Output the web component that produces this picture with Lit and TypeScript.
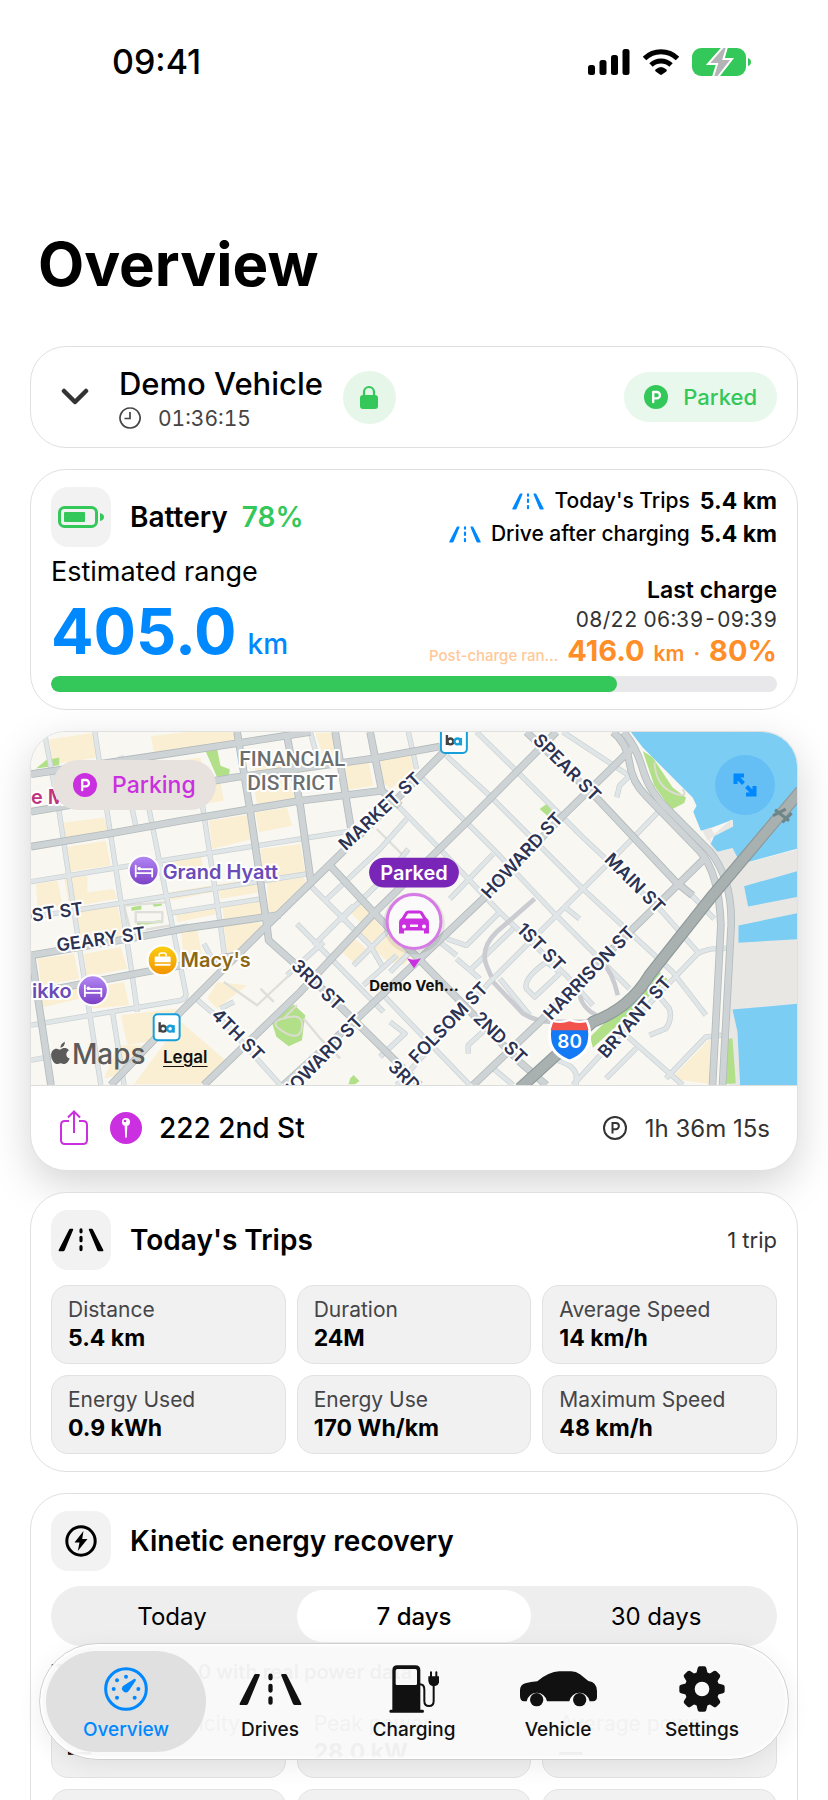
import { css, html, LitElement, svg } from 'lit';
import { customElement, property, state } from 'lit/decorators.js';
import { classMap } from 'lit/directives/class-map.js';

const roadIcon = html`
  <svg class="road" viewBox="0 0 190 100" aria-hidden="true">
    <path d="M50 3h10q4 0 2 5L27 93q-2 4-6 4H5q-5 0-3-5L45 7q2-4 5-4zM140 3h-10q-4 0-2 5l35 85q2 4 6 4h16q5 0 3-5L145 7q-2-4-5-4z"/>
    <path d="M95 8v8M95 39v14M95 77v13" fill="none" stroke="currentColor" stroke-width="13" stroke-linecap="round"/>
  </svg>`;

const parkIcon = html`
  <svg class="park" viewBox="0 0 24 24" aria-hidden="true">
    <circle cx="12" cy="12" r="12"/>
    <path d="M9.2 17.2V7h3.600a3.100 3.100 0 0 1 0 6.300H9.2" fill="none" stroke="#fff" stroke-width="2.300" stroke-linecap="round" stroke-linejoin="round"/>
  </svg>`;

const tabs = [
  {
    id: 'overview',
    label: 'Overview',
    icon: html`
      <svg width="44" height="44" viewBox="0 0 132 132" aria-hidden="true">
        <circle cx="66" cy="66" r="61" fill="none" stroke="currentColor" stroke-width="9"/>
        <circle cx="66" cy="29" r="6"/><circle cx="39" cy="40" r="6"/><circle cx="29" cy="66" r="6"/>
        <circle cx="39" cy="92" r="6"/><circle cx="92" cy="92" r="6"/><circle cx="103" cy="66" r="6"/>
        <path d="M94 36q3 2 1 5L74 72a11 11 0 1 1-17-15L90 36q2-1 4 0z"/>
      </svg>`,
  },
  { id: 'drives', label: 'Drives', icon: roadIcon },
  {
    id: 'charging',
    label: 'Charging',
    icon: html`
      <svg width="50" height="48" viewBox="0 0 150 144" aria-hidden="true">
        <path fill-rule="evenodd" d="M10 16Q10 1 25 1h54q15 0 15 15v118h7q4 0 4 4.500t-4 4.500H5q-4 0-4-4.500t4-4.500h5zM20 17v39q0 4 4 4h56q4 0 4-4V17q0-5-5-5H25q-5 0-5 5z"/>
        <path d="M92 58q14 0 14 16v34q0 15 14 15t14-15V58" fill="none" stroke="currentColor" stroke-width="6"/>
        <path d="M118 34h33v12q0 14-12 17h-9q-12-3-12-17z"/>
        <path d="M126 22v14M142 22v14" stroke="currentColor" stroke-width="6" stroke-linecap="round"/>
      </svg>`,
  },
  {
    id: 'vehicle',
    label: 'Vehicle',
    icon: html`
      <svg width="77" height="36" viewBox="0 0 231 108" aria-hidden="true">
        <path d="M12 91Q0 90 0 74V58q0-16 16-21 16-4 36-6Q86 2 118 1h36q14 0 26 9l25 20q26 4 26 30v18q0 12-12 13h-10a31 31 0 0 0-61 0H81a31 31 0 0 0-61 0z"/>
        <circle cx="50" cy="86" r="20"/><circle cx="179" cy="86" r="20"/>
      </svg>`,
  },
  {
    id: 'settings',
    label: 'Settings',
    icon: html`
      <svg width="46" height="46" viewBox="-69 -69 138 138" aria-hidden="true">
        <circle r="37" fill="none" stroke="currentColor" stroke-width="30"/>
        ${[0, 45, 90, 135, 180, 225, 270, 315].map(
          (a) => svg`<path transform="rotate(${a})" d="M-17-46l4-17q1-5 6-5H7q5 0 6 5l4 17z"/>`
        )}
      </svg>`,
  },
];

const periods = ['Today', '7 days', '30 days'];

const tripStats = [
  ['Distance', '5.4 km'],
  ['Duration', '24M'],
  ['Average Speed', '14 km/h'],
  ['Energy Used', '0.9 kWh'],
  ['Energy Use', '170 Wh/km'],
  ['Maximum Speed', '48 km/h'],
];

const kineticStats = [
  ['Kinetic electricity', '—'],
  ['Peak power', '28.0 kW'],
  ['Average power', '—'],
  ['Recovered', '0.6 kWh'],
  ['Share', '12%'],
  ['Events', '31'],
];

// Map geometry, in thirds of a pixel.
const blocks = [
  '85,40 220,20 232,95 95,115', '390,30 500,18 640,18 645,45 400,80', '135,150 220,135 240,225 160,240',
  '440,110 540,95 550,170 600,170 610,225 450,250', '700,110 790,95 800,150 710,165', '700,170 800,155 825,220 710,240',
  '885,20 940,20 960,90 910,95', '975,115 1045,105 1060,180 985,192', '1080,100 1170,85 1180,130 1110,190 1090,170',
  '130,290 250,275 262,320 130,345', '130,365 255,345 270,420 140,440', '565,285 680,268 695,340 575,370',
  '705,260 800,245 815,300 790,305 715,320', '45,475 110,465 125,540 50,550', '130,460 200,450 200,500 280,490 290,520 145,545',
  '430,400 540,380 550,440 440,455', '720,370 840,355 855,440 730,460', '450,500 570,480 575,500 450,525',
  '590,475 715,460 720,500 600,520', '740,470 850,455 860,475 780,560 745,560', '465,560 590,540 595,565 470,590',
  '605,540 720,525 725,565 610,585', '160,560 290,540 310,630 180,660', '50,700 160,685 175,760 60,780',
  '190,685 300,665 320,730 195,755', '480,615 530,610 545,690 490,700', '610,600 720,590 725,610 640,690 620,690',
  '200,790 310,770 325,840 215,850', '40,790 170,790 180,820 50,850', '300,870 470,850 380,950 320,960',
  '290,960 370,960 290,1050 250,1060', '480,890 620,1010 550,1078 340,1078', '590,770 680,780 590,850 560,820',
  '990,560 1020,530 1055,560 1025,595', '1015,620 1060,575 1110,640 1050,650', '965,680 1005,640 1045,675 1005,715',
  '1060,670 1110,630 1180,690 1150,720 1105,710', '2073,940 2073,1078 1955,1060',
];

const parks = [
  '555,75 590,70 600,120 628,130 625,152 590,155', '45,128 75,103 115,95 115,118 90,122', '332,545 362,540 362,552 332,556',
  '395,535 420,528 425,540 400,544', '348,592 420,584 420,592 350,600',
  '820,838 855,870 850,905 845,945 805,963 768,935 755,893 790,860', '990,1060 1000,1050 1018,1068 1005,1078 985,1078',
  '1870,75 1900,95 1960,185 2000,215 1995,232 1955,252 1905,180', '1915,735 1945,762 1720,968 1712,935',
  '2120,940 2140,940 2150,1075 2115,1078', '1560,250 1580,235 1602,260 1590,277',
];

const minorRoads = [
  'M30 468L480 396 870 335 990 316', 'M30 575L480 505 860 445', 'M455 562L722 520', 'M455 610L500 602', 'M30 900L270 860 480 825Q500 820 495 800L385 250',
  'M30 1005L130 988', 'M70 18L115 260 190 760 240 1080', 'M222 18L270 330 330 720 350 860', 'M300 90L345 300', 'M375 90L400 250',
  'M540 200L600 600 612 690', 'M275 860L310 1080', 'M550 655L575 700', 'M870 18L890 90', 'M1165 18L1190 130',
  'M870 480L1050 660 1085 720', 'M910 530L1080 370 1160 280', 'M960 585L1110 440 1165 370', 'M830 595L1090 860', 'M880 660L1000 540', 'M800 750L910 650',
  'M1000 720L1130 590', 'M1030 780L1130 690', 'M1190 620L1250 560M1110 740L1190 660', 'M1090 195L1260 370 1440 560 1640 750 1720 840',
  'M1200 150L1340 290 1430 380 1610 570 1830 790', 'M1280 90L1410 210 1620 420 1690 490 1960 740 2060 870', 'M1370 18L1490 135 1690 335 1930 560 2035 680',
  'M1630 18L1830 150 1800 180 1792 215', 'M1130 1080L1410 770 1610 570 1760 420 1930 245', 'M1660 1080L1770 960 2035 685Q2060 668 2120 668',
  'M1760 1060L1850 970', 'M1820 930L1990 1080', 'M1940 1060L2060 935 2110 930', 'M1110 890L1155 925 1080 995',
  'M1290 520L1420 385M1440 560L1340 660 1280 640', 'M1440 760L1530 870M1620 740L1580 710Q1510 760 1520 790L1545 815 1620 745',
  'M1345 985V960L1400 910M1420 1030L1480 1080', 'M520 815L620 900 780 1080', 'M1090 810L1350 1080', 'M600 850L640 830',
  'M1310 700L1380 760M1345 740L1480 610', 'M1260 650L1310 690', 'M1580 1000Q1660 1010 1670 1050V1080', 'M1630 540L1680 580',
  'M1990 480L2085 580', 'M1900 790L1950 850Q1960 880 1940 910L1890 930',
];

const majorRoads = [
  'M30 145L400 90 650 52 870 18', 'M30 258L640 155 1060 98 1260 62', 'M30 363L260 325 480 285 840 225 1085 195 1140 240',
  'M30 690L370 632 500 608 780 568', 'M30 805L400 735 650 690', 'M650 18L690 260 738 590 745 645 880 765 1200 1080',
  'M800 30L840 240 872 470', 'M945 18L992 305', 'M1050 18L1085 195', 'M30 680L90 1080', 'M270 1080L480 860 740 600 930 415 1130 220 1280 70',
  'M550 1080L840 800 1060 565 1340 290 1610 18', 'M790 1080L1000 890 1200 700 1390 520 1620 280 1840 65',
  'M1360 1080L1560 890 1810 640 2060 395', 'M925 415L1060 560 1210 715 1500 1010 1580 1080', 'M1520 18L1730 215 1970 470 2020 510',
  'M1780 18Q1822 50 1830 110T1880 210L2040 375Q2100 440 2105 600L2080 1080', 'M1812 18Q1850 60 1870 130T1950 255L2070 375Q2140 460 2136 600L2110 1080',
];

const streets: [string, number, number, number, string][] = [
  ['MARKET ST', 354, 84, -43, 'middle'], ['HOWARD ST', 497, 128, -47, 'middle'], ['SPEAR ST', 533, 40, 45, 'middle'],
  ['MAIN ST', 601, 156, 45, 'middle'], ['1ST ST', 507, 220, 45, 'middle'], ['HARRISON ST', 564, 246, -46, 'middle'],
  ['BRYANT ST', 610, 290, -49, 'middle'], ['FOLSOM ST', 423, 296, -46, 'middle'], ['2ND ST', 466, 311, 44, 'middle'],
  ['3RD ST', 283, 258, 44, 'middle'], ['4TH ST', 203, 308, 45, 'middle'], ['HOWARD ST', 334, 291, -46, 'end'],
  ['3RD ST', 357, 337, 44, 'start'], ['POST ST', 53, 183, -8, 'end'], ['GEARY ST', 71, 214, -8, 'middle'],
];

const bed = svg`<path d="M-8-5V6M-8 2.500H8.500V6M-5-1.500H8.500V2" fill="none" stroke="#fff" stroke-width="1.800" stroke-linecap="round"/><circle cx="-4.500" cy="-2" r="1.800" fill="#fff"/>`;

const bartIcon = (x: number, y: number) => svg`
  <g transform="translate(${x} ${y})">
    <rect x="-13" y="-13" width="26" height="26" rx="4" fill="#fff" stroke="#169fdb" stroke-width="2"/>
    <g fill="none" stroke-width="2.400"><path d="M-7-5V5" stroke="#444"/><circle cx="-3.500" cy="1.500" r="2.900" stroke="#444"/><circle cx="3.500" cy="1.500" r="2.900" stroke="#169fdb"/><path d="M7-2V5.500" stroke="#169fdb"/></g>
  </g>`;

@customElement('stat-tile')
export class StatTile extends LitElement {
  static styles = css`
    :host {
      display: block;
      box-sizing: border-box;
      padding: 9px 16px 10px;
      border: 1px solid #e2e2e3;
      border-radius: 17px;
      background: #f1f1f2;
      line-height: 29px;
      white-space: nowrap;
    }

    .label {
      color: #454547;
      font-size: 21px;
    }

    .value {
      font-size: 23px;
      font-weight: 700;
    }
  `;

  @property() label = '';

  @property() value = '';

  render() {
    return html`
      <div class="label">${this.label}</div>
      <div class="value">${this.value}</div>
    `;
  }
}

@customElement('app-root')
export class AppRoot extends LitElement {
  static styles = css`
    :host {
      display: block;
      position: relative;
      height: 100vh;
      overflow: hidden;
      background: #fff;
      color: #000;
      font-family: Inter, 'Liberation Sans', sans-serif;
      --green: #34c759;
      --blue: #0088ff;
      --pink: #cb30e0;
    }

    * {
      box-sizing: border-box;
    }

    svg {
      display: block;
      flex: none;
      fill: currentColor;
    }

    button {
      font: inherit;
      color: inherit;
      border: 0;
      background: none;
      padding: 0;
      cursor: pointer;
    }

    .screen {
      height: 100%;
      overflow: hidden auto;
      scrollbar-width: none;
    }

    .status {
      display: flex;
      justify-content: space-between;
      align-items: center;
      height: 123px;
      padding: 0 77px 0 112px;
      font-size: 34px;
      font-weight: 500;
    }

    .status-icons {
      display: flex;
      align-items: center;
      gap: 13px;
    }

    h1 {
      margin: 0;
      padding: 101px 38px 42px;
      font-size: 60px;
      line-height: 80px;
      font-weight: 700;
    }

    h2 {
      display: flex;
      gap: 14px;
      margin: 0;
      font-size: 28px;
      line-height: 36px;
      font-weight: 600;
    }

    main {
      display: flex;
      flex-direction: column;
      gap: 21px;
      padding: 0 30px 160px;
    }

    .card {
      display: flex;
      flex-direction: column;
      gap: 15px;
      padding: 17px 20px;
      border: 1px solid #e0e0e1;
      border-radius: 36px;
      background: #fff;
      position: relative;
    }

    .card.vehicle {
      flex-direction: row;
      align-items: center;
      gap: 20px;
      height: 102px;
      padding: 0 20px;
    }

    .toggle {
      display: grid;
      place-items: center;
      width: 48px;
      height: 60px;
      color: #333;
    }

    .names {
      padding-top: 6px;
    }

    .name {
      font-size: 31px;
      line-height: 36px;
      font-weight: 500;
    }

    .since {
      display: flex;
      align-items: center;
      gap: 17px;
      color: #444;
      font-size: 21px;
      line-height: 33px;
      font-variant-numeric: tabular-nums;
    }

    .lock {
      display: grid;
      place-items: center;
      width: 53px;
      height: 53px;
      border-radius: 50%;
      background: #e6f7ea;
      color: var(--green);
    }

    .pill {
      display: flex;
      align-items: center;
      gap: 15px;
      height: 50px;
      padding: 0 20px;
      border-radius: 25px;
      font-size: 22px;
      font-weight: 500;
    }

    .park {
      width: 24px;
      height: 24px;
    }

    .vehicle .pill {
      margin-left: auto;
      background: #e8f8ec;
      color: var(--green);
    }

    .head {
      display: flex;
      align-items: center;
      gap: 19px;
    }

    .badge {
      display: grid;
      place-items: center;
      width: 60px;
      height: 60px;
      border-radius: 17px;
      background: #f2f2f3;
    }

    .badge .road {
      width: 46px;
      height: 24px;
    }

    .head .count {
      margin-left: auto;
      color: #333;
      font-size: 22px;
    }

    .card.battery {
      gap: 8px;
    }

    .columns {
      display: flex;
      justify-content: space-between;
      gap: 12px;
    }

    .percent {
      color: var(--green);
    }

    .estimate {
      padding-top: 8px;
      font-size: 27px;
      line-height: 34px;
    }

    .range {
      display: flex;
      align-items: baseline;
      gap: 11px;
      height: 79px;
      padding-top: 9px;
      color: var(--blue);
      font-size: 63px;
      line-height: 66px;
      font-weight: 700;
      white-space: nowrap;
    }

    .range small {
      font-size: 28px;
      line-height: 36px;
      font-weight: 500;
    }

    .side {
      display: flex;
      flex-direction: column;
      align-items: flex-end;
      min-width: 0;
      white-space: nowrap;
    }

    .side .line {
      display: flex;
      align-items: center;
      gap: 10px;
      margin-bottom: 5px;
      font-size: 21px;
      line-height: 28px;
      font-weight: 500;
    }

    .line .road {
      width: 32px;
      height: 17px;
      color: var(--blue);
    }

    .line b {
      font-size: 23px;
      font-weight: 700;
    }

    .last {
      margin-top: auto;
      font-size: 23px;
      line-height: 29px;
      font-weight: 600;
    }

    .date {
      color: #333;
      font-size: 21px;
      line-height: 29px;
      font-variant-numeric: tabular-nums;
    }

    .post {
      display: flex;
      align-items: baseline;
      gap: 9px;
      color: #ff8d28;
      font-size: 29px;
      line-height: 34px;
      font-weight: 700;
    }

    .post .note {
      color: #ffc898;
      font-size: 15px;
      line-height: 20px;
      font-weight: 500;
    }

    .post .unit {
      font-size: 21px;
      line-height: 20px;
      font-weight: 600;
    }

    .bar {
      height: 16px;
      border-radius: 8px;
      background: #e8e8ea;
      overflow: hidden;
    }

    .fill {
      height: 100%;
      border-radius: 8px;
      background: var(--green);
    }

    .card.place {
      gap: 0;
      padding: 0;
      box-shadow: 0 14px 42px rgba(0, 0, 0, 0.17);
    }

    .map {
      position: relative;
      height: 354px;
      border-radius: 35px 35px 0 0;
      border-bottom: 1px solid #dddddc;
      overflow: hidden;
      background: #f8f7f2;
    }

    .map > svg {
      width: 100%;
      height: 100%;
      font-weight: 600;
    }

    .roads path {
      fill: none;
      stroke-linejoin: round;
    }

    .halo {
      paint-order: stroke;
      stroke: #fff;
      stroke-width: 4px;
      stroke-linejoin: round;
    }

    .map .pill {
      position: absolute;
      left: 22px;
      top: 28px;
      background: #e7e2de;
      color: var(--pink);
      font-size: 23px;
    }

    .expand {
      position: absolute;
      right: 22px;
      top: 23px;
      display: grid;
      place-items: center;
      width: 60px;
      height: 60px;
      border-radius: 50%;
      background: #65bff5;
      color: var(--blue);
    }

    .legal {
      position: absolute;
      left: 132px;
      bottom: 17px;
      color: #111;
      font-size: 17px;
      line-height: 22px;
      font-weight: 600;
      text-underline-offset: 3px;
    }

    .address {
      display: flex;
      align-items: center;
      gap: 17px;
      height: 84px;
      padding: 0 27px 0 28px;
      font-size: 28px;
      font-weight: 500;
    }

    .address .share {
      color: var(--pink);
      margin-right: 4px;
    }

    .elapsed {
      display: flex;
      align-items: center;
      gap: 18px;
      margin-left: auto;
      color: #333;
      font-size: 24px;
      font-weight: 400;
    }

    .tiles {
      display: grid;
      grid-template-columns: repeat(3, 1fr);
      gap: 11px;
    }

    .segments {
      display: grid;
      grid-template-columns: repeat(3, 1fr);
      height: 60px;
      border-radius: 30px;
      background: #eeeeef;
      font-size: 24px;
    }

    .segments button.on {
      margin: 4px;
      border-radius: 26px;
      background: #fff;
      font-weight: 500;
    }

    .summary {
      color: #222;
      font-size: 20px;
      line-height: 23px;
      font-weight: 600;
    }

    nav {
      position: absolute;
      left: 39px;
      right: 39px;
      bottom: 40px;
      display: grid;
      grid-template-columns: repeat(5, 1fr);
      height: 117px;
      padding: 7px 14px;
      border: 1px solid #cfcfd0;
      border-radius: 59px;
      background: rgba(249, 249, 249, 0.96);
      box-shadow: inset 0 0 3px 2px #fff, 0 6px 24px rgba(0, 0, 0, 0.07);
    }

    nav button {
      display: flex;
      flex-direction: column;
      align-items: center;
      margin: 0 -8px;
      padding: 13px 0 0;
      border-radius: 51px;
      color: #111;
      font-size: 19px;
      line-height: 24px;
      font-weight: 500;
    }

    nav button.on {
      background: #e0e0e1;
      color: var(--blue);
    }

    .glyph {
      display: grid;
      place-items: center;
      height: 50px;
      margin-bottom: 4px;
    }

    .glyph .road {
      width: 63px;
      height: 33px;
    }
  `;

  @state() tab = 'overview';

  @state() period = '7 days';

  @state() charge = 78;

  _renderMap() {
    return html`
      <svg viewBox="0 0 768 354" preserveAspectRatio="xMidYMid slice" role="img" aria-label="Map of parking location">
        <defs>
          <linearGradient id="hotel" x2="0" y2="1"><stop stop-color="#b388f5"/><stop offset="1" stop-color="#7b3fc4"/></linearGradient>
          <linearGradient id="shop" x2="0" y2="1"><stop stop-color="#fbd010"/><stop offset="1" stop-color="#f29100"/></linearGradient>
        </defs>
        <g class="roads" transform="translate(-10 -6) scale(0.33333)">
          ${blocks.map((p) => svg`<polygon points=${p} fill="#fbefd3"/>`)}
          <polygon points="2050,300 2095,378 2140,367 2170,415 2340,370 2340,1080 2130,1080 2135,500" fill="#e9e7e4"/>
          <g fill="#7ccdf3">
            <polygon points="1832,15 1870,65 2020,215 2032,240 2022,258 2045,315 2075,307 2140,282 2142,300 2085,330 2075,355 2095,378 2140,367 2165,415 2340,368 2340,15"/>
            <polygon points="2175,482 2340,435 2340,513 2187,543"/>
            <polygon points="2158,600 2340,562 2340,641 2158,652"/>
            <polygon points="2140,853 2340,835 2340,1082 2163,1082 2155,920"/>
          </g>
          <polygon points="2050,315 2075,305 2085,325 2135,282 2142,302 2085,332 2065,345" fill="#e9e7e4"/>
          ${parks.map((p) => svg`<polygon points=${p} fill="#b2e088"/>`)}
          <path d="M790 880Q850 860 845 905T790 920 790 880L830 840M1905 110Q1910 180 1960 200T1990 190" stroke="#dcdcd2" stroke-width="6"/>
          <path d="M610 770L710 840 860 700M720 790L760 830M850 880L900 940 960 1000M310 540L440 530 450 600 330 620ZM345 560H425V590H345ZM1070 310L1150 390" stroke="#dedfd9" stroke-width="7"/>
          ${minorRoads.map((d) => svg`<path d=${d} stroke="#c9d0d2" stroke-width="16"/>`)}
          ${minorRoads.map((d) => svg`<path d=${d} stroke="#e0e6e7" stroke-width="12"/>`)}
          <path d="M1545 520L1430 620Q1380 670 1400 720L1415 755M1420 770L1510 865Q1550 890 1600 890H1720M1740 700Q1780 740 1795 810M1680 810Q1690 850 1730 870" stroke="#cbccd1" stroke-width="14"/>
          ${majorRoads.map((d) => svg`<path d=${d} stroke="#b4bbbd" stroke-width="23"/>`)}
          ${majorRoads.map((d) => svg`<path d=${d} stroke="#ced4d5" stroke-width="18"/>`)}
          <path d="M1500 1090L1720 890Q1830 850 1890 750L2080 510 2345 195" stroke="#8e9999" stroke-width="36"/>
          <path d="M1500 1090L1720 890Q1830 850 1890 750L2080 510 2345 195" stroke="#a9b0b0" stroke-width="29"/>
          <path d="M2268 252L2310 285M2262 270L2300 250M2290 290L2318 262" stroke="#6f8587" stroke-width="9"/>
        </g>
        <g class="halo" fill="#2b3252" font-size="18">
          ${streets.map(([name, x, y, angle, anchor]) => svg`<text transform="translate(${x} ${y}) rotate(${angle})" text-anchor=${anchor}>${name}</text>`)}
        </g>
        <g class="halo" fill="#6c6f70" font-family="Roboto" font-size="21" font-weight="500" text-anchor="middle">
          <text x="262" y="34">FINANCIAL</text>
          <text x="262" y="58">DISTRICT</text>
        </g>
        <g class="halo" font-size="20">
          <text x="0" y="72" fill="#bf3580">e M.</text>
          <text x="132" y="147" fill="#6a4bb8">Grand Hyatt</text>
          <text x="1" y="267" fill="#6a4bb8">ikko</text>
          <text x="150" y="236" fill="#8c6814">Macy's</text>
        </g>
        <g stroke="#fff" stroke-width="2">
          <circle cx="113" cy="139" r="15" fill="url(#hotel)"/>
          <circle cx="62" cy="259" r="15" fill="url(#hotel)"/>
          <circle cx="132" cy="229" r="15" fill="url(#shop)"/>
        </g>
        <g transform="translate(113 139)">${bed}</g>
        <g transform="translate(62 259)">${bed}</g>
        <path d="M124 226q0-1 1-1h14q1 0 1 1v5h-16zM124 232.500h16v1q0 1-1 1h-14q-1 0-1-1z" fill="#fff"/>
        <path d="M128.500 225v-1.500q0-2 2-2h3q2 0 2 2v1.500" fill="none" stroke="#fff" stroke-width="1.500"/>
        ${bartIcon(136, 296)}${bartIcon(424, 8)}
        <path d="M523 290q9 3 17-1 8 4 17 1 4 8 3 17-1 16-20 23-19-7-20-23-1-9 3-17z" fill="#1479f5" stroke="#fff" stroke-width="3"/>
        <path d="M523.500 291q9 2 16.500-1 7.500 3 16.500 1l2.500 8h-38z" fill="#f2544d"/>
        <text x="540" y="317" fill="#fff" font-size="19" text-anchor="middle">80</text>
        <g fill="#5b5b5b">
          <path transform="translate(30 322)" d="M0-4c2-1.500 6-2 8 1-3.500 2-3.500 7 .8 8.500C7.500 9 5.500 11 3.500 11 2 11 1.500 10.200-.3 10.200S-2.500 11-4 11c-3 0-5.800-5-5.800-9 0-5 4-7.500 7-6 1.300.5 1.800.5 2.800 0zM-.5-5.500C-.5-8.500 1.500-10.500 4-11.500 4-8.500 2.500-6-.5-5.500z"/>
          <text x="41" y="333" font-size="28" font-weight="500">Maps</text>
        </g>
        <rect x="339" y="126" width="90" height="30" rx="15" fill="#7825b8"/>
        <text x="384" y="148" fill="#fff" font-size="20" text-anchor="middle">Parked</text>
        <circle cx="384" cy="192" r="31" fill="#000" opacity="0.08"/>
        <circle cx="384" cy="190" r="27" fill="#fafafa" stroke="#d67ae6" stroke-width="3"/>
        <path d="M377 227q7 3 14 0l-7 10z" fill="#cb30e0"/>
        <path fill="#cb30e0" fill-rule="evenodd" d="M369 202v-11q0-3 3-5l3-5q1-2 4-2h10q3 0 4 2l3 5q3 2 3 5v11h-5v-3h-20v3zM375 187h18l-3-5h-12zM374 193a2 2 0 1 0 .1 0zM394 193a2 2 0 1 0 .1 0zM380 193h8v2.500h-8z"/>
        <text x="384" y="260" fill="#111" font-size="15" font-weight="700" text-anchor="middle">Demo Veh…</text>
      </svg>`;
  }

  render() {
    return html`
      <div class="screen">
        <div class="status">
          <span>09:41</span>
          <div class="status-icons">
            <svg width="42" height="26" viewBox="0 0 42 26" aria-hidden="true">
              <rect y="16" width="7" height="10" rx="2.500"/><rect x="11.500" y="11" width="7" height="15" rx="2.500"/>
              <rect x="23" y="6" width="7" height="20" rx="2.500"/><rect x="34.500" width="7" height="26" rx="2.500"/>
            </svg>
            <svg width="36" height="27" viewBox="0 0 36 27" aria-hidden="true">
              <g fill="none" stroke="currentColor" stroke-width="5"><path d="M1.500 10.500a23.500 23.500 0 0 1 33 0M8 17a14.500 14.500 0 0 1 20 0"/></g>
              <path d="M12.500 21.500q5.500-5 11 0 .8 1-.2 1.900l-4.300 3.200q-1 .8-2 0l-4.300-3.200q-1-.9-.2-1.900z"/>
            </svg>
            <svg width="59" height="28" viewBox="0 0 59 28" aria-hidden="true">
              <rect width="54" height="28" rx="9" fill="#34c759"/><path d="M56 10q3 1 3 4t-3 4z" fill="#34c759"/>
              <path d="M31-1L16 16h9l-4 13h5L40 11h-8.500L35-1z" fill="#b4b4b6" stroke="#fff" stroke-width="2"/>
            </svg>
          </div>
        </div>
        <h1>Overview</h1>

        <main>
          <section class="card vehicle">
            <button class="toggle" aria-label="Choose vehicle">
              <svg width="28" height="18" viewBox="0 0 28 18"><path d="M3 3l11 11L25 3" fill="none" stroke="currentColor" stroke-width="4.500" stroke-linecap="round" stroke-linejoin="round"/></svg>
            </button>
            <div class="names">
              <div class="name">Demo Vehicle</div>
              <div class="since">
                <svg width="22" height="22" viewBox="0 0 22 22" aria-hidden="true"><path d="M11 1a10 10 0 1 0 .1 0M11 5v6.500H5.500" fill="none" stroke="currentColor" stroke-width="1.700"/></svg>
                01:36:15
              </div>
            </div>
            <div class="lock">
              <svg width="18" height="24" viewBox="0 0 18 24" aria-hidden="true"><rect y="10" width="18" height="14" rx="3"/><path d="M4 11V7a5 5 0 0 1 10 0v4" fill="none" stroke="currentColor" stroke-width="2.200"/></svg>
            </div>
            <div class="pill">${parkIcon} Parked</div>
          </section>

          <section class="card battery">
            <div class="columns">
              <div>
                <div class="head">
                  <div class="badge">
                    <svg width="46" height="22" viewBox="0 0 46 22" color="#34c759" aria-hidden="true">
                      <rect x="1.500" y="1.500" width="37" height="19" rx="5" fill="none" stroke="currentColor" stroke-width="3"/>
                      <rect x="6" y="6" width="21" height="10" rx="1"/><path d="M42 7q4 1 4 4t-4 4z"/>
                    </svg>
                  </div>
                  <h2>Battery <span class="percent">${this.charge}%</span></h2>
                </div>
                <div class="estimate">Estimated range</div>
                <div class="range">405.0 <small>km</small></div>
              </div>
              <div class="side">
                <div class="line">${roadIcon} Today's Trips <b>5.4 km</b></div>
                <div class="line">${roadIcon} Drive after charging <b>5.4 km</b></div>
                <div class="last">Last charge</div>
                <div class="date">08/22 06:39-09:39</div>
                <div class="post">
                  <span class="note">Post-charge ran…</span>
                  <span>416.0</span><span class="unit">km</span><span class="unit">·</span><span>80%</span>
                </div>
              </div>
            </div>
            <div class="bar"><div class="fill" style="width: ${this.charge}%"></div></div>
          </section>

          <section class="card place">
            <div class="map">
              ${this._renderMap()}
              <div class="pill">${parkIcon} Parking</div>
              <button class="expand" aria-label="Expand map">
                <svg width="24" height="24" viewBox="0 0 24 24"><path d="M2.500 11V2.500H11M3 3l7.500 7.500M21.500 13v8.500H13M21 21l-7.500-7.500" fill="none" stroke="currentColor" stroke-width="4"/></svg>
              </button>
              <a class="legal" href="#legal">Legal</a>
            </div>
            <div class="address">
              <button class="share" aria-label="Share location">
                <svg width="30" height="36" viewBox="0 0 30 36"><path d="M10 11H6q-4 0-4 4v15q0 4 4 4h18q4 0 4-4V15q0-4-4-4h-4M15 23V2M9 7.500L15 1.500l6 6" fill="none" stroke="currentColor" stroke-width="2"/></svg>
              </button>
              <svg width="32" height="32" viewBox="0 0 32 32" aria-hidden="true">
                <circle cx="16" cy="16" r="16" fill="#cb30e0"/><circle cx="16" cy="10" r="4" fill="#fff"/><circle cx="15" cy="9" r="1.300" fill="#cb30e0"/>
                <path d="M14.700 14h2.600l-.5 11q-.8 2-1.600 0z" fill="#fff"/>
              </svg>
              <span>222 2nd St</span>
              <span class="elapsed">
                <svg width="24" height="24" viewBox="0 0 24 24" aria-hidden="true"><circle cx="12" cy="12" r="11" fill="none" stroke="currentColor" stroke-width="2"/><path d="M9.500 17.500V7h3.300a3 3 0 0 1 0 6.200H9.500" fill="none" stroke="currentColor" stroke-width="2"/></svg>
                1h 36m 15s
              </span>
            </div>
          </section>

          <section class="card">
            <div class="head">
              <div class="badge">${roadIcon}</div>
              <h2>Today's Trips</h2>
              <span class="count">1 trip</span>
            </div>
            <div class="tiles">
              ${tripStats.map(([label, value]) => html`<stat-tile label=${label} value=${value}></stat-tile>`)}
            </div>
          </section>

          <section class="card">
            <div class="head">
              <div class="badge">
                <svg width="32" height="32" viewBox="0 0 32 32" aria-hidden="true"><circle cx="16" cy="16" r="14.200" fill="none" stroke="currentColor" stroke-width="3"/><path d="M18.500 6L9.500 17.500h5L12.800 26l9.700-12h-5.300z"/></svg>
              </div>
              <h2>Kinetic energy recovery</h2>
            </div>
            <div class="segments">
              ${periods.map((p) => html`
                <button class=${classMap({ on: p === this.period })} @click=${() => { this.period = p; }}>${p}</button>
              `)}
            </div>
            <div class="summary">7 days: 3 trips, 0 with real power data</div>
            <div class="tiles">
              ${kineticStats.map(([label, value]) => html`<stat-tile label=${label} value=${value}></stat-tile>`)}
            </div>
          </section>
        </main>
      </div>

      <nav>
        ${tabs.map((t) => html`
          <button class=${classMap({ on: t.id === this.tab })} @click=${() => { this.tab = t.id; }}>
            <span class="glyph">${t.icon}</span>${t.label}
          </button>
        `)}
      </nav>
    `;
  }
}
